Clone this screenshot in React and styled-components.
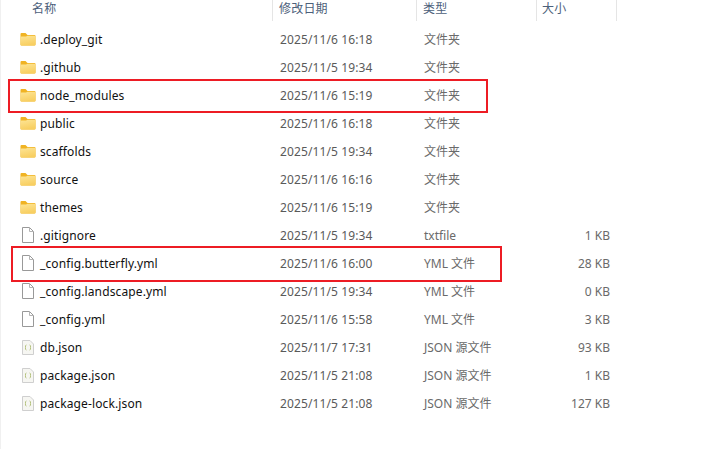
import styled, { createGlobalStyle } from 'styled-components';

const GlobalStyle = createGlobalStyle`
    html, body {
        margin: 0;
        background: #fff;
    }
    body {
        font-family: "Noto Sans", "Noto Sans CJK SC", sans-serif;
        font-size: 12px;
    }
`;

const columns = '273px 144px 120px 80px';

const Window = styled.div`
    width: 706px;
    height: 449px;
    box-sizing: border-box;
    border-left: 1px solid #f0f0f0;
    overflow: hidden;
`;
const Header = styled.div`
    display: grid;
    grid-template-columns: 272px 144px 120px 80px;
    height: 21px;
    margin-bottom: 4px;
`;
const HeaderCell = styled.div`
    box-sizing: border-box;
    height: 21px;
    padding-left: ${(p) => p.$pad}px;
    border-right: ${(p) => (p.$last ? '0' : '1px solid #e5e5e5')};
    color: #4c607a;
    line-height: 15px;
    letter-spacing: 0.2px;
    font-family: "Noto Sans CJK SC", sans-serif;
`;
const Row = styled.div`
    position: relative;
    display: grid;
    grid-template-columns: ${columns};
    height: 28px;
    align-items: center;
`;
const NameCell = styled.div`
    display: flex;
    align-items: center;
    gap: 4px;
    padding-left: 18px;
    color: #111;
    letter-spacing: 0.12px;
`;
const IconSlot = styled.span`
    display: flex;
    justify-content: center;
    width: 17px;
`;
const DateCell = styled.div`
    padding-left: 6px;
    color: #5a5a5a;
    letter-spacing: 0.12px;
`;
const TypeCell = styled.div`
    padding-left: 6px;
    color: #6a6a6a;
`;
const SizeCell = styled.div`
    width: 72px;
    text-align: right;
    color: #6a6a6a;
`;
const Highlight = styled.div`
    position: absolute;
    top: ${(p) => p.$top}px;
    left: ${(p) => p.$left}px;
    width: ${(p) => p.$width}px;
    height: ${(p) => p.$height}px;
    box-sizing: border-box;
    border: 2px solid #ed1c24;
    pointer-events: none;
`;

const FolderIcon = () => (
    <svg width="16" height="14" viewBox="0 0 16 14">
        <defs>
            <linearGradient id="folderBody" x1="0" y1="0" x2="0.3" y2="1">
                <stop offset="0" stopColor="#fde596" />
                <stop offset="1" stopColor="#f8cf62" />
            </linearGradient>
        </defs>
        <path d="M0.5 2 Q0.5 1 1.5 1 H5.5 L7.5 3 H14.5 Q15.5 3 15.5 4 V12.5 Q15.5 13.5 14.5 13.5 H1.5 Q0.5 13.5 0.5 12.5 Z" fill="#f0b323" />
        <path d="M0.5 5.5 Q0.5 4.5 1.5 4.5 H6 L7.5 3.7 H14.5 Q15.5 3.7 15.5 4.7 V12.5 Q15.5 13.5 14.5 13.5 H1.5 Q0.5 13.5 0.5 12.5 Z" fill="url(#folderBody)" />
    </svg>
);

const FileIcon = () => (
    <svg width="12" height="16" viewBox="0 0 12 16">
        <path d="M0.5 0.5 H7.5 L11.5 4.5 V15.5 H0.5 Z" fill="#fff" stroke="#999" />
        <path d="M7.5 0.5 V4.5 H11.5" fill="none" stroke="#b4b4b4" />
    </svg>
);

const JsonIcon = () => (
    <svg width="12" height="15" viewBox="0 0 12 15">
        <path d="M0.5 0.5 H8 L11.5 4 V14.5 H0.5 Z" fill="#f6f6f2" stroke="#cfcfcf" />
        <path d="M4.5 5 Q3 5 3.5 7.5 Q3 10 4.5 10" fill="none" stroke="#b5c27e" />
        <path d="M7.5 5 Q9 5 8.5 7.5 Q9 10 7.5 10" fill="none" stroke="#b5c27e" />
    </svg>
);

const icons = { folder: FolderIcon, file: FileIcon, json: JsonIcon };

const files = [
    { name: '.deploy_git', date: '2025/11/6 16:18', type: '文件夹', icon: 'folder' },
    { name: '.github', date: '2025/11/5 19:34', type: '文件夹', icon: 'folder' },
    { name: 'node_modules', date: '2025/11/6 15:19', type: '文件夹', icon: 'folder', mark: { top: -2, left: 7, width: 480, height: 34 } },
    { name: 'public', date: '2025/11/6 16:18', type: '文件夹', icon: 'folder' },
    { name: 'scaffolds', date: '2025/11/5 19:34', type: '文件夹', icon: 'folder' },
    { name: 'source', date: '2025/11/6 16:16', type: '文件夹', icon: 'folder' },
    { name: 'themes', date: '2025/11/6 15:19', type: '文件夹', icon: 'folder' },
    { name: '.gitignore', date: '2025/11/5 19:34', type: 'txtfile', size: '1 KB', icon: 'file' },
    { name: '_config.butterfly.yml', date: '2025/11/6 16:00', type: 'YML 文件', size: '28 KB', icon: 'file', mark: { top: -3, left: 10, width: 491, height: 36 } },
    { name: '_config.landscape.yml', date: '2025/11/5 19:34', type: 'YML 文件', size: '0 KB', icon: 'file' },
    { name: '_config.yml', date: '2025/11/6 15:58', type: 'YML 文件', size: '3 KB', icon: 'file' },
    { name: 'db.json', date: '2025/11/7 17:31', type: 'JSON 源文件', size: '93 KB', icon: 'json' },
    { name: 'package.json', date: '2025/11/5 21:08', type: 'JSON 源文件', size: '1 KB', icon: 'json' },
    { name: 'package-lock.json', date: '2025/11/5 21:08', type: 'JSON 源文件', size: '127 KB', icon: 'json' },
];

const App = () => {
    return (
        <Window>
            <GlobalStyle />
            <Header>
                <HeaderCell $pad={31}>名称</HeaderCell>
                <HeaderCell $pad={6}>修改日期</HeaderCell>
                <HeaderCell $pad={6}>类型</HeaderCell>
                <HeaderCell $pad={5}>大小</HeaderCell>
            </Header>
            {files.map((file) => {
                const Icon = icons[file.icon];
                return (
                    <Row key={file.name}>
                        <NameCell>
                            <IconSlot>
                                <Icon />
                            </IconSlot>
                            {file.name}
                        </NameCell>
                        <DateCell>{file.date}</DateCell>
                        <TypeCell>{file.type}</TypeCell>
                        <SizeCell>{file.size}</SizeCell>
                        {file.mark && <Highlight $top={file.mark.top} $left={file.mark.left} $width={file.mark.width} $height={file.mark.height} />}
                    </Row>
                );
            })}
        </Window>
    );
};

export default App;
